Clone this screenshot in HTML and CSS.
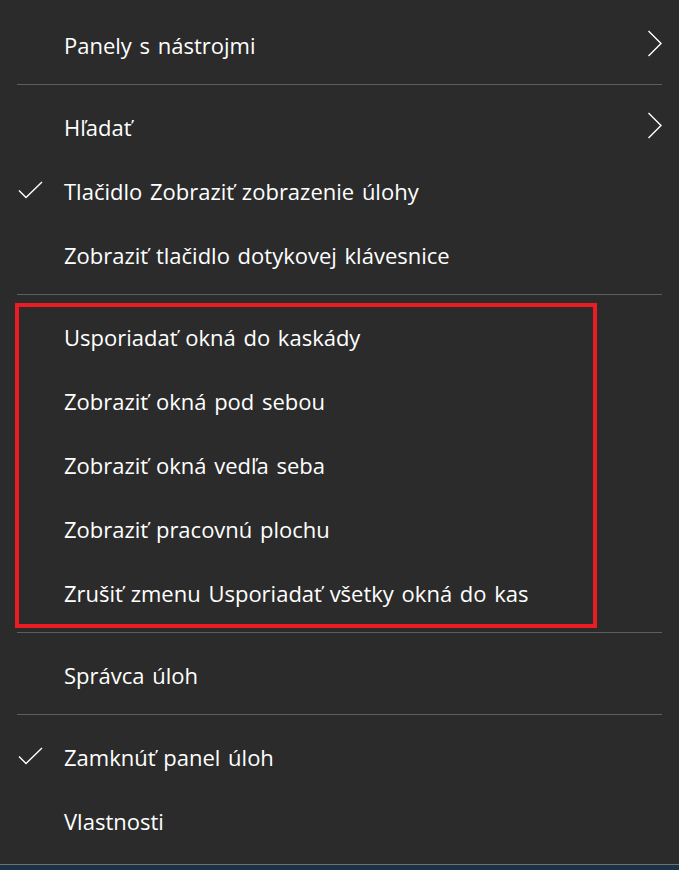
FILE: index.html
```html
<!DOCTYPE html>
<html lang="sk">
<head>
    <meta charset="UTF-8">
    <meta name="viewport" content="width=device-width, initial-scale=1.0">
    <title>Kontextová ponuka panela úloh</title>
    <link rel="stylesheet" href="styles.css">
</head>
<body>
    <div class="menu">
        <div class="item">
            <span class="icon"></span>
            <span class="label">Panely s nástrojmi</span>
            <svg class="arrow" width="16" height="28" viewBox="0 0 16 28">
                <path d="M1.5 1 L14 13.5 L1.5 26" />
            </svg>
        </div>

        <div class="separator"></div>

        <div class="item">
            <span class="icon"></span>
            <span class="label">Hľadať</span>
            <svg class="arrow" width="16" height="28" viewBox="0 0 16 28">
                <path d="M1.5 1 L14 13.5 L1.5 26" />
            </svg>
        </div>
        <div class="item">
            <span class="icon">
                <svg width="28" height="20" viewBox="0 0 28 20">
                    <path d="M2 9.5 L9 16.5 L25 1" />
                </svg>
            </span>
            <span class="label">Tlačidlo Zobraziť zobrazenie úlohy</span>
        </div>
        <div class="item">
            <span class="icon"></span>
            <span class="label">Zobraziť tlačidlo dotykovej klávesnice</span>
        </div>

        <div class="separator"></div>

        <div class="group">
            <div class="highlight"></div>
            <div class="item">
                <span class="icon"></span>
                <span class="label">Usporiadať okná do kaskády</span>
            </div>
            <div class="item">
                <span class="icon"></span>
                <span class="label">Zobraziť okná pod sebou</span>
            </div>
            <div class="item">
                <span class="icon"></span>
                <span class="label">Zobraziť okná vedľa seba</span>
            </div>
            <div class="item">
                <span class="icon"></span>
                <span class="label">Zobraziť pracovnú plochu</span>
            </div>
            <div class="item">
                <span class="icon"></span>
                <span class="label">Zrušiť zmenu Usporiadať všetky okná do kas</span>
            </div>
        </div>

        <div class="separator"></div>

        <div class="item">
            <span class="icon"></span>
            <span class="label">Správca úloh</span>
        </div>

        <div class="separator"></div>

        <div class="item">
            <span class="icon">
                <svg width="28" height="20" viewBox="0 0 28 20">
                    <path d="M2 9.5 L9 16.5 L25 1" />
                </svg>
            </span>
            <span class="label">Zamknúť panel úloh</span>
        </div>
        <div class="item">
            <span class="icon"></span>
            <span class="label">Vlastnosti</span>
        </div>
    </div>

    <div class="taskbar"></div>
</body>
</html>
```

FILE: styles.css
```css
* {
    margin: 0;
    padding: 0;
    box-sizing: border-box;
}

html, body {
    height: 100%;
}

body {
    font-family: 'Open Sans', 'Noto Sans', sans-serif;
    background: #2b2b2b;
    color: #ffffff;
    display: flex;
    flex-direction: column;
    overflow: hidden;
}

.menu {
    flex: 1;
    padding-top: 13px;
}

.item {
    display: flex;
    align-items: center;
    height: 64px;
    padding-right: 16px;
    font-size: 22px;
    word-spacing: 2px;
}

.icon {
    width: 64px;
    flex-shrink: 0;
    display: flex;
    align-items: center;
    padding-left: 17px;
}

.icon svg path {
    fill: none;
    stroke: #ffffff;
    stroke-width: 1.4;
}

.label {
    flex: 1;
    white-space: nowrap;
}

.arrow {
    margin-top: -3px;
}

.arrow path {
    fill: none;
    stroke: #ffffff;
    stroke-width: 1.4;
}

.separator {
    height: 1px;
    margin: 7px 17px 10px 17px;
    background: #5e5e5e;
}

.group {
    position: relative;
}

.highlight {
    position: absolute;
    top: -2px;
    left: 15px;
    width: 582px;
    height: 325px;
    border: 4px solid #ec1c24;
}

.taskbar {
    height: 5px;
    border-top: 1px solid #707070;
    background: #1b3249;
    box-sizing: content-box;
}
```
